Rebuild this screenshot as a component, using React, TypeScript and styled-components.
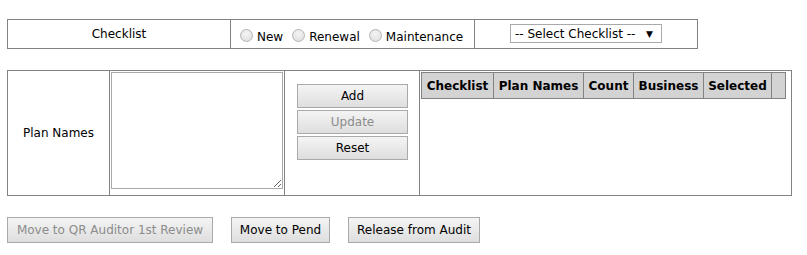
import styled, { createGlobalStyle } from 'styled-components'

const GlobalStyle = createGlobalStyle`
  body {
    margin: 0;
    background: #fff;
    font-family: "DejaVu Sans", Verdana, sans-serif;
    font-size: 12px;
    color: #000;
  }
`

const Page = styled.div`
  padding: 19px 0 0 7px;
  display: flex;
  flex-direction: column;
`

const FilterBar = styled.div`
  display: grid;
  grid-template-columns: 223px 244px 222px;
  width: 691px;
  height: 30px;
  box-sizing: border-box;
  border: 1px solid #828282;
`

const Cell = styled.div<{ $last?: boolean; $center?: boolean; $top?: boolean }>`
  display: flex;
  align-items: ${p => (p.$top ? 'flex-start' : 'center')};
  justify-content: ${p => (p.$center ? 'center' : 'flex-start')};
  border-right: ${p => (p.$last ? 'none' : '1px solid #828282')};
`

const RadioGroup = styled.div`
  display: flex;
  align-items: center;
  padding: 5px 0 0 9px;
  gap: 9px;
`

const RadioItem = styled.label`
  display: flex;
  align-items: center;
  gap: 4px;
`

const RadioDot = styled.span`
  width: 13px;
  height: 13px;
  border-radius: 50%;
  box-sizing: border-box;
  border: 1px solid #b4b4b4;
  background: radial-gradient(circle at 50% 35%, #f4f4f4 0%, #dcdcdc 100%);
  margin-top: -3px;
`

const Select = styled.div`
  width: 152px;
  height: 19px;
  box-sizing: border-box;
  border: 1px solid #a9a9a9;
  display: flex;
  align-items: center;
  justify-content: space-between;
  padding: 0 8px 0 4px;
  margin-top: -1px;
  font-size: 12px;
`

const Arrow = styled.span`
  font-size: 9px;
`

const MainPanel = styled.div`
  margin-top: 21px;
  display: grid;
  grid-template-columns: 102px 175px 135px 371px;
  width: 785px;
  height: 126px;
  box-sizing: border-box;
  border: 1px solid #828282;
`

const TextCell = styled(Cell)`
  padding: 1px 0 0 1px;
`

const TextArea = styled.textarea`
  width: 172px;
  height: 117px;
  box-sizing: border-box;
  border: 1px solid #a9a9a9;
  resize: both;
  margin: 0;
  font-family: inherit;
`

const ButtonStack = styled.div`
  display: flex;
  flex-direction: column;
  gap: 2px;
  padding: 13px 0 0 12px;
`

const Button = styled.button<{ $w?: number; $h?: number }>`
  width: ${p => p.$w ?? 111}px;
  height: ${p => p.$h ?? 24}px;
  box-sizing: border-box;
  border: 1px solid #a9a9a9;
  border-radius: 0;
  background: linear-gradient(#f4f4f4, #dedede);
  font-family: "DejaVu Sans", Verdana, sans-serif;
  font-size: 12px;
  color: #000;
  padding: 0;
  margin: 0;
  white-space: nowrap;
  &:disabled {
    color: #8c8c8c;
  }
`

const GridCell = styled(Cell)`
  padding: 1px 0 0 1px;
`

const HeaderRow = styled.div`
  display: grid;
  grid-template-columns: 72px 90px 50px 70px 68px 15px;
  width: 365px;
  height: 27px;
  box-sizing: border-box;
  border: 1px solid #828282;
  background: #d3d3d3;
`

const HeaderCell = styled.div<{ $last?: boolean }>`
  display: flex;
  align-items: center;
  justify-content: center;
  font-weight: bold;
  font-size: 12px;
  border-right: ${p => (p.$last ? 'none' : '1px solid #828282')};
`

const ActionBar = styled.div`
  margin-top: 21px;
  display: flex;
  gap: 18px;
`

const headers = ['Checklist', 'Plan Names', 'Count', 'Business', 'Selected', '']

export default function App() {
  return (
    <>
      <GlobalStyle />
      <Page>
        <FilterBar>
          <Cell $center>Checklist</Cell>
          <Cell>
            <RadioGroup>
              <RadioItem><RadioDot />New</RadioItem>
              <RadioItem><RadioDot />Renewal</RadioItem>
              <RadioItem><RadioDot />Maintenance</RadioItem>
            </RadioGroup>
          </Cell>
          <Cell $center $last>
            <Select>
              <span>-- Select Checklist --</span>
              <Arrow>▼</Arrow>
            </Select>
          </Cell>
        </FilterBar>

        <MainPanel>
          <Cell $center>Plan Names</Cell>
          <TextCell $top>
            <TextArea />
          </TextCell>
          <Cell $top>
            <ButtonStack>
              <Button>Add</Button>
              <Button disabled>Update</Button>
              <Button>Reset</Button>
            </ButtonStack>
          </Cell>
          <GridCell $top $last>
            <HeaderRow>
              {headers.map((h, i) => (
                <HeaderCell key={i} $last={i === headers.length - 1}>{h}</HeaderCell>
              ))}
            </HeaderRow>
          </GridCell>
        </MainPanel>

        <ActionBar>
          <Button $w={206} $h={26} disabled>Move to QR Auditor 1st Review</Button>
          <Button $w={99} $h={26}>Move to Pend</Button>
          <Button $w={132} $h={26}>Release from Audit</Button>
        </ActionBar>
      </Page>
    </>
  )
}
